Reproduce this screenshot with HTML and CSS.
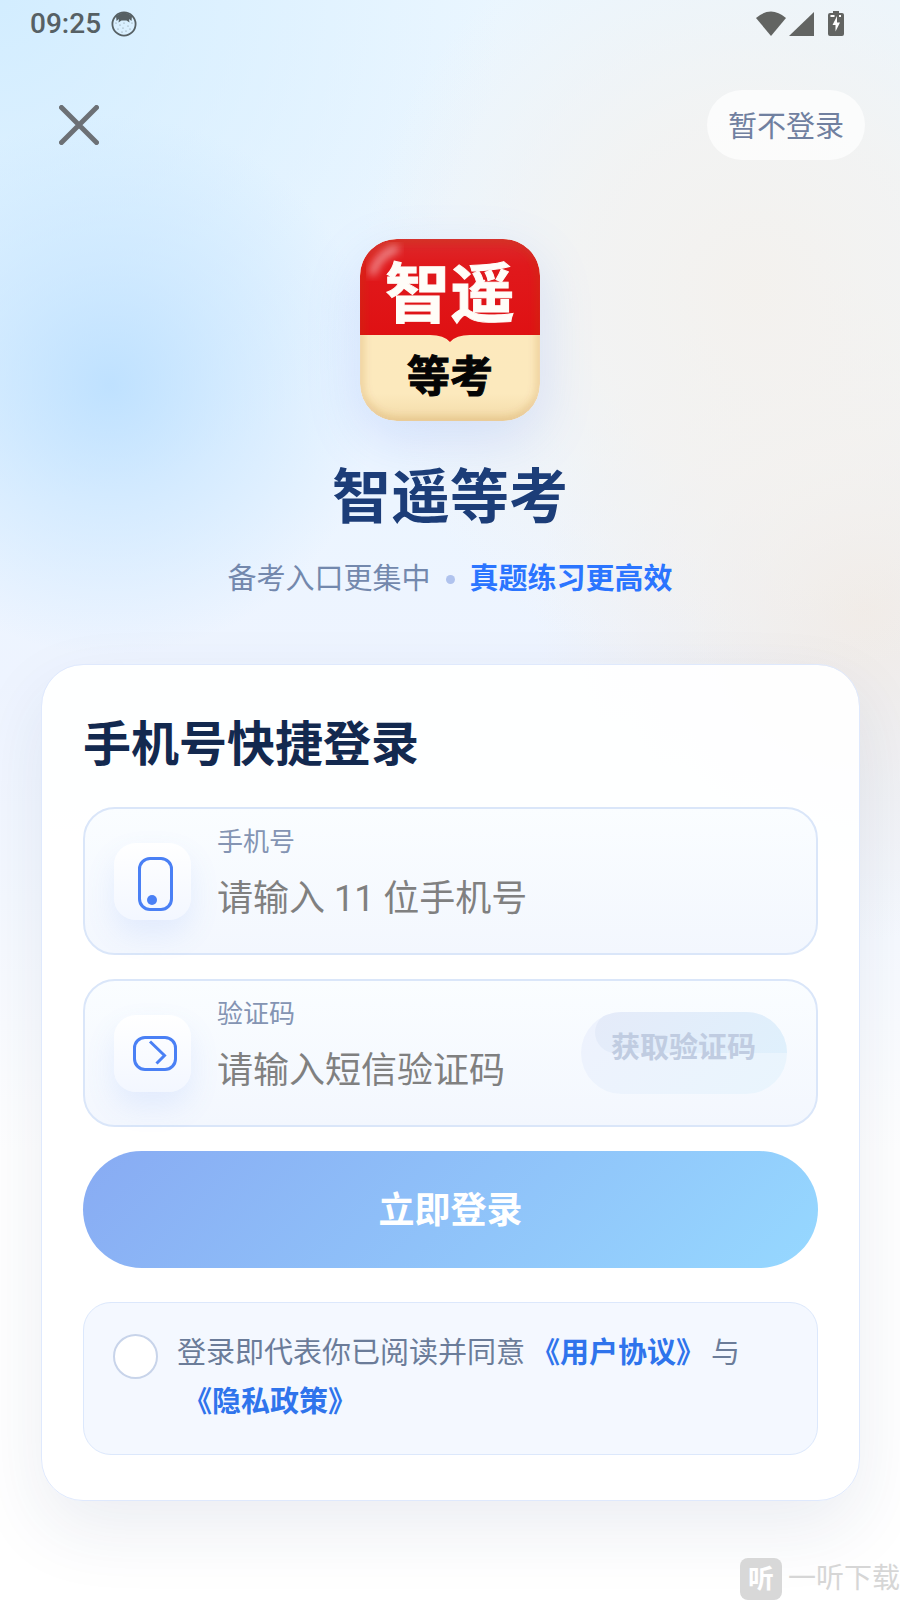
FILE: index.html
```html
<!DOCTYPE html>
<html lang="zh-CN">
  <head>
    <meta charset="utf-8">
    <meta name="viewport" content="width=device-width, initial-scale=1">
    <title>智遥等考</title>
    <link rel="stylesheet" href="styles.css">
  </head>
  <body>
    <div class="page">
      <div class="status-bar">
        <span class="time">09:25</span>
        <svg class="face-icon" width="26" height="26" viewBox="0 0 26 26">
          <circle cx="13" cy="13" r="11.6" fill="none" stroke="#566064" stroke-width="1.8"/>
          <path d="M5 5Q13-2 21 5L20.500 10 18 8 18.500 11.500 15.500 9.500H10.500L7.500 11.500 8 8 5.500 10Z" fill="#566064"/>
          <g fill="#7b8a91">
            <circle cx="5" cy="12" r=".6"/><circle cx="9" cy="14" r=".6"/><circle cx="13" cy="12" r=".6"/>
            <circle cx="17" cy="15" r=".6"/><circle cx="21" cy="12" r=".6"/><circle cx="7" cy="18" r=".6"/>
            <circle cx="12" cy="17" r=".6"/><circle cx="15" cy="20" r=".6"/><circle cx="19" cy="18" r=".6"/>
            <circle cx="11" cy="21" r=".6"/>
          </g>
        </svg>
        <div class="status-icons">
          <svg width="30" height="26" viewBox="0 0 30 26"><path d="M0 7Q15-6 30 7L15 25Z" fill="#626462"/></svg>
          <svg width="25" height="26" viewBox="0 0 25 26"><path d="M25 1V25H0Z" fill="#626462"/></svg>
          <svg class="battery" width="16" height="26" viewBox="0 0 16 26">
            <path d="M5 0H11V2H14Q16 2 16 4V23Q16 25 14 25H2Q0 25 0 23V4Q0 2 2 2H5Z" fill="#626462"/>
            <path d="M9 5 4.500 14H7.500V20.500L12 11.500H9Z" fill="#fff"/>
            <path d="M2.500 4H6.500V6H2.500ZM11 4H13V6H11Z" fill="#fff"/>
          </svg>
        </div>
      </div>

      <div class="nav">
        <button class="close-btn" aria-label="关闭">
          <svg width="40" height="40" viewBox="0 0 40 40"><path d="M2.500 2.500 37.500 37.500M37.500 2.500 2.500 37.500" stroke="#6c7075" stroke-width="5" stroke-linecap="round"/></svg>
        </button>
        <button class="skip-btn">暂不登录</button>
      </div>

      <div class="brand">
        <svg class="logo" width="180" height="182" viewBox="0 0 180 182">
          <defs>
            <clipPath id="logo-shape"><rect width="180" height="182" rx="37"/></clipPath>
            <linearGradient id="red" x1="0" y1="0" x2="0" y2="1">
              <stop offset="0" stop-color="#dc2a2c"/>
              <stop offset=".25" stop-color="#e0191c"/>
              <stop offset="1" stop-color="#df1012"/>
            </linearGradient>
            <linearGradient id="cream" x1="0" y1="0" x2="0" y2="1">
              <stop offset="0" stop-color="#fde9bd"/>
              <stop offset=".85" stop-color="#fce9bd"/>
              <stop offset="1" stop-color="#f3dba8"/>
            </linearGradient>
            <filter id="soft" x="-20%" y="-20%" width="140%" height="140%"><feGaussianBlur stdDeviation="4"/></filter>
          </defs>
          <g clip-path="url(#logo-shape)">
            <rect width="180" height="182" fill="url(#cream)"/>
            <path d="M0 0H180V96H110Q96 96 90 103Q84 96 70 96H0Z" fill="url(#red)"/>
            <rect width="180" height="182" rx="37" fill="none" stroke="#a35a28" stroke-opacity=".25" stroke-width="6" filter="url(#soft)"/>
            <path d="M12 165V42" fill="none" stroke="#fff" stroke-opacity=".2" stroke-width="6" filter="url(#soft)"/>
            <path d="M12 36Q17 16 38 9" fill="none" stroke="#fff" stroke-opacity=".55" stroke-width="7" filter="url(#soft)"/>
          </g>
          <text class="logo-top" x="90" y="78">智遥</text>
          <text class="logo-bottom" x="90" y="153">等考</text>
        </svg>
        <h1 class="brand-name">智遥等考</h1>
        <div class="slogan">
          <span>备考入口更集中</span>
          <span class="dot"></span>
          <strong>真题练习更高效</strong>
        </div>
      </div>

      <form class="card">
        <h2 class="card-title">手机号快捷登录</h2>

        <div class="field">
          <div class="field-icon">
            <svg width="77" height="77" viewBox="0 0 77 77">
              <rect x="25.500" y="15.500" width="32" height="51" rx="10.500" fill="none" stroke="#4a80f5" stroke-width="3"/>
              <circle cx="38" cy="57" r="5" fill="#4a80f5"/>
            </svg>
          </div>
          <div class="field-body">
            <label for="phone">手机号</label>
            <input type="tel" id="phone" placeholder="请输入 11 位手机号">
          </div>
        </div>

        <div class="field">
          <div class="field-icon">
            <svg width="77" height="77" viewBox="0 0 77 77">
              <rect x="20.500" y="22.500" width="41" height="32" rx="10.500" fill="none" stroke="#4a80f5" stroke-width="3"/>
              <path d="M36 26.500 50.500 40.500 42.500 48.500" fill="none" stroke="#4a80f5" stroke-width="3"/>
            </svg>
          </div>
          <div class="field-body">
            <label for="code">验证码</label>
            <input type="text" id="code" placeholder="请输入短信验证码">
          </div>
          <button type="button" class="code-btn" disabled><span>获取验证码</span></button>
        </div>

        <button type="button" class="login-btn">立即登录</button>

        <div class="agreement">
          <input type="checkbox" id="agree">
          <div class="agreement-text"><label for="agree">登录即代表你已阅读并同意</label><a href="#">《用户协议》</a>与<a href="#">《隐私政策》</a></div>
        </div>
      </form>

      <div class="watermark">
        <span class="watermark-logo">听</span>
        <span class="watermark-name">一听下载</span>
      </div>
    </div>
  </body>
</html>
```

FILE: styles.css
```css
* {
  box-sizing: border-box;
}
body {
  margin: 0;
  font-family: Roboto, "Noto Sans CJK SC", sans-serif;
  font-size: 29px;
  color: #6b7c99;
}
button, input {
  font-family: inherit;
  margin: 0;
}
button {
  border: none;
  padding: 0;
}
.page {
  position: relative;
  min-height: 100vh;
  padding-bottom: 99px;
  overflow: hidden;
  background:
    radial-gradient(circle 270px at 110px 385px, rgba(184, 222, 255, 0.85), rgba(190, 225, 255, 0.5) 45%, rgba(220, 238, 255, 0)),
    radial-gradient(circle 400px at 84% 290px, rgba(244, 241, 237, 0.95), rgba(245, 242, 238, 0.7) 45%, rgba(244, 243, 243, 0)),
    radial-gradient(circle 330px at 96% 610px, rgba(240, 234, 229, 0.95), rgba(240, 237, 235, 0.6) 50%, rgba(240, 240, 242, 0)),
    radial-gradient(circle 500px at 0 0, rgba(208, 236, 255, 0.9), rgba(215, 239, 255, 0)),
    linear-gradient(180deg, #eaf6ff 0, #ecf5ff 500px, #eef4ff 680px, #f5f9ff 900px, #ffffff 1150px);
}

/* status bar */
.status-bar {
  display: flex;
  align-items: center;
  height: 48px;
  padding: 0 56px 0 30px;
}
.time {
  font-size: 28px;
  font-weight: 500;
  line-height: 46px;
  color: #566064;
  margin-right: 10px;
}
.status-icons {
  display: flex;
  gap: 3px;
  margin-left: auto;
}
.battery {
  margin-left: 11px;
}

.nav {
  display: flex;
  justify-content: space-between;
  align-items: center;
  margin-top: 42px;
  padding: 0 35px 0 59px;
}
.close-btn {
  display: flex;
  background: none;
}
.skip-btn {
  height: 70px;
  padding: 0 21px 2px;
  border-radius: 35px;
  background: rgba(255, 255, 255, 0.7);
  font-size: 29px;
  color: #7080a0;
}

/* logo and name */
.brand {
  display: flex;
  flex-direction: column;
  align-items: center;
  margin-top: 79px;
}
.logo {
  border-radius: 37px;
  box-shadow: 0 18px 54px rgba(90, 130, 240, 0.18);
}
.logo text {
  font-family: "Noto Sans CJK SC", sans-serif;
  font-weight: 700;
  text-anchor: middle;
  paint-order: stroke;
}
.logo-top {
  font-size: 65px;
  fill: #fffdf8;
  stroke: #fffdf8;
}
.logo-bottom {
  font-size: 43px;
  fill: #050505;
  stroke: #050505;
}
.brand-name {
  margin: 42px 0 26px;
  font-size: 59px;
  line-height: 70px;
  color: #1c3d78;
}
.slogan {
  display: flex;
  align-items: center;
  line-height: 40px;
  color: #7388ad;
}
.slogan strong {
  color: #2b75ff;
}
.dot {
  width: 9px;
  height: 9px;
  margin: 0 15px;
  border-radius: 50%;
  background: #b0c3ee;
}

/* login card */
.card {
  margin: 65px 40px 0 41px;
  padding: 50px 41px 45px;
  border: 1px solid #dfe9fd;
  border-radius: 42px;
  background: rgba(255, 255, 255, 0.93);
  background-clip: padding-box;
  box-shadow: 0 28px 72px rgba(30, 50, 110, 0.09);
}
.card-title {
  margin: 0 0 32px;
  font-size: 48px;
  line-height: 60px;
  color: #13294f;
}
.field {
  display: flex;
  align-items: center;
  gap: 26px;
  margin-bottom: 24px;
  padding: 0 29px;
  border: 2px solid #dae6f9;
  border-radius: 32px;
  background: linear-gradient(180deg, #fafdff, #f3f7fe);
}
.field-icon {
  flex: none;
  height: 77px;
  border-radius: 22px;
  background: linear-gradient(180deg, #ffffff, #f3f7ff);
  box-shadow: 0 14px 30px rgba(90, 140, 250, 0.12);
}
.field-body {
  flex: 1;
  min-width: 0;
  display: flex;
  flex-direction: column;
  gap: 15px;
  padding: 16px 0 29px;
}
.field-body label {
  font-size: 26px;
  line-height: 34px;
  color: #8494b3;
}
.field-body input {
  width: 100%;
  height: 50px;
  padding: 0;
  border: none;
  outline: none;
  background: none;
  font-size: 36px;
  color: #13294f;
}
.field-body input::placeholder {
  color: #808080;
}
.code-btn {
  position: relative;
  flex: none;
  height: 82px;
  padding: 0 31px 16px 30px;
  border-radius: 41px;
  overflow: hidden;
  background: linear-gradient(135deg, #eef2fd, #e9f5fd);
  font-size: 29px;
  font-weight: bold;
  color: #c0cce1;
}
/* highlight on the upper half of the pill */
.code-btn::before {
  content: "";
  position: absolute;
  top: 0;
  left: 14px;
  right: 0;
  height: 50%;
  border-radius: 21px 0 0 21px;
  background: linear-gradient(135deg, #e5ebf9, #dff0fc);
}
.code-btn span {
  position: relative;
}
.login-btn {
  display: block;
  width: 100%;
  height: 117px;
  padding-bottom: 6px;
  border-radius: 59px;
  background: linear-gradient(135deg, #88abf3, #96d8ff);
  font-size: 36px;
  font-weight: bold;
  color: #ffffff;
}

.agreement {
  display: flex;
  align-items: flex-start;
  gap: 19px;
  margin-top: 34px;
  padding: 26px 29px 27px;
  border: 1px solid #dce8fc;
  border-radius: 28px;
  background: #f4f8ff;
}
.agreement input {
  appearance: none;
  flex: none;
  width: 45px;
  height: 45px;
  margin-top: 5px;
  border: 2px solid #c8d4ea;
  border-radius: 50%;
  background: #ffffff;
}
.agreement input:checked {
  background: #2f74ec;
}
.agreement-text {
  line-height: 49px;
}
.agreement a {
  display: inline-block;
  margin: 0 6px;
  font-weight: bold;
  color: #2f74ec;
  text-decoration: none;
}

.watermark {
  position: absolute;
  right: 0;
  bottom: 0;
  display: flex;
  align-items: center;
  gap: 6px;
  color: #d6d6d6;
}
.watermark-logo {
  width: 42px;
  height: 42px;
  border-radius: 8px;
  background: #d8d8d8;
  font-size: 26px;
  font-weight: bold;
  line-height: 42px;
  text-align: center;
  color: #ffffff;
}
.watermark-name {
  font-size: 28px;
  line-height: 40px;
}
```
